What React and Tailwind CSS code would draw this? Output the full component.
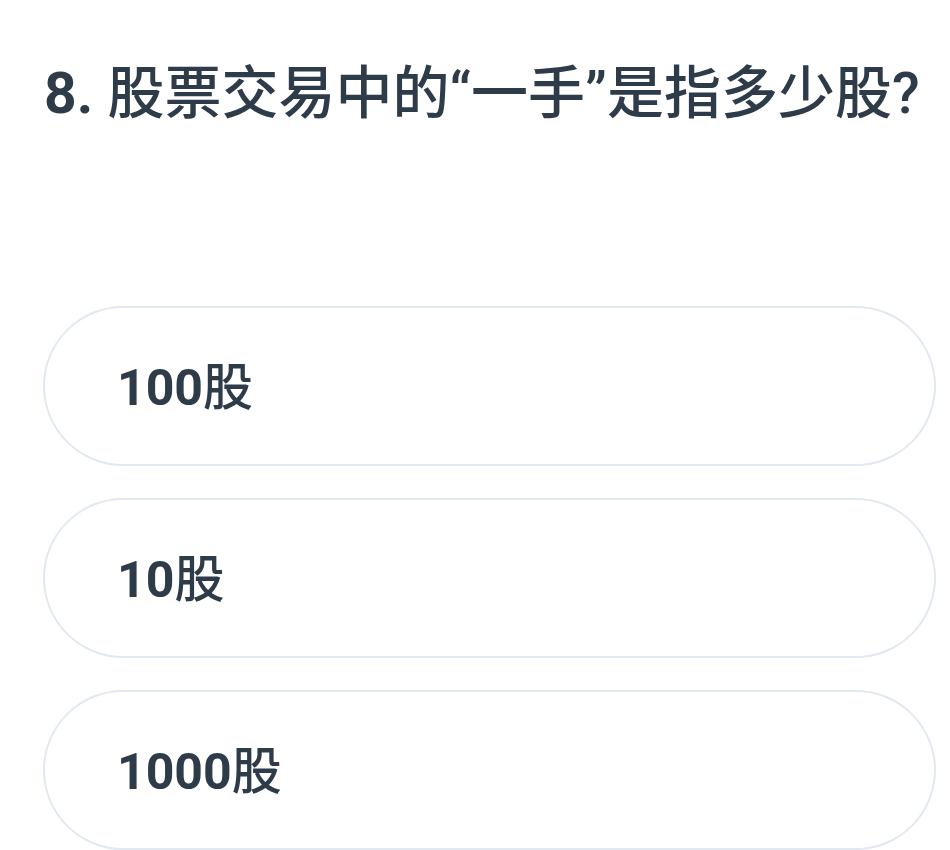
import React from 'react';

const options = ['100', '10', '1000'];

const Option = ({ num }) => (
  <div className="h-[160px] w-[893px] rounded-full border-2 border-[#e3e9f0] bg-white flex items-center pl-[72px]">
    <span className="text-[50px] leading-none text-[#2e3c4a] pt-[3px]">
      <span className="font-bold">{num}</span>
      <span className="font-medium">股</span>
    </span>
  </div>
);

export default function App() {
  return (
    <div
      className="w-[950px] h-[850px] bg-white overflow-hidden"
      style={{ fontFamily: 'Roboto, "Noto Sans CJK SC", sans-serif' }}
    >
      <div className="pt-[59px] pl-[44px]">
        <h1 className="text-[57px] leading-[70px] text-[#2e3c4a] whitespace-nowrap">
          <span className="font-bold">8. </span>
          <span className="font-medium">股票交易中的“一手”是指多少股?</span>
        </h1>
      </div>
      <div className="mt-[177px] ml-[43px] flex flex-col gap-[32px]">
        {options.map((n) => (
          <Option key={n} num={n} />
        ))}
      </div>
    </div>
  );
}
